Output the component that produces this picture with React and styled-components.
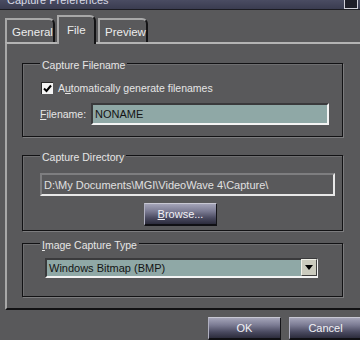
import React from "react";
import styled, { createGlobalStyle } from "styled-components";

const Global = createGlobalStyle`
  html, body { margin: 0; padding: 0; background: #5a5a5c; }
  body { font-family: "Liberation Sans", Arial, sans-serif; font-size: 11px; color: #e6e6e6; overflow: hidden; }
`;

const Window = styled.div`
  width: 360px;
  height: 340px;
  display: flex;
  flex-direction: column;
  background: #59595b;
  overflow: hidden;
`;

const TitleBar = styled.div`
  height: 9px;
  flex: none;
  display: flex;
  justify-content: space-between;
  overflow: hidden;
  background: linear-gradient(180deg, #4a4c62, #3a3c50);
  border-bottom: 1px solid #1c1c22;
`;

const Title = styled.span`
  display: block;
  margin: -6px 0 0 7px;
  font-size: 11px;
  line-height: 13px;
  color: #d8dae6;
`;

const TitleButton = styled.div`
  width: 14px;
  height: 12px;
  margin: -3px 2px 0 0;
  background: #1e1e28;
  border: 1px solid #d0d0d8;
  box-sizing: border-box;
`;

const TabRow = styled.div`
  height: 32px;
  flex: none;
  display: flex;
  align-items: flex-end;
  padding-left: 5px;
  gap: 2px;
  position: relative;
  z-index: 1;
`;

const Tab = styled.div`
  box-sizing: border-box;
  height: ${(p) => (p.$active ? "29px" : "24px")};
  width: ${(p) => p.$w}px;
  padding: ${(p) => (p.$active ? "6px 0 0 8px" : "5px 0 0 5px")};
  background: #59595b;
  border-top: 2px solid #a8a8a8;
  border-left: 2px solid #a8a8a8;
  border-right: 2px solid #141416;
  border-top-right-radius: 6px;
  margin-bottom: ${(p) => (p.$active ? "-2px" : "0")};
  font-size: 11.5px;
  color: #ececec;
  line-height: 14px;
  white-space: nowrap;
`;

const Panel = styled.div`
  box-sizing: border-box;
  height: 268px;
  margin-left: 5px;
  width: 380px;
  flex: none;
  border-top: 2px solid #b4b4b4;
  border-left: 2px solid #a8a8a8;
  border-bottom: 2px solid #111113;
  padding: 19px 0 0 15px;
  display: flex;
  flex-direction: column;
`;

const Group = styled.div`
  position: relative;
  box-sizing: border-box;
  width: 321px;
  height: ${(p) => p.$h}px;
  margin-bottom: ${(p) => p.$mb}px;
  border: 1px solid #121214;
  box-shadow: 1px 1px 0 #7c7c7e, inset 1px 1px 0 #6e6e70;
  padding: ${(p) => p.$pad};
  display: flex;
  flex-direction: column;
`;

const Legend = styled.span`
  position: absolute;
  top: -5px;
  left: 17px;
  padding: 0 2px;
  background: #59595b;
  font-size: 10.5px;
  line-height: 13px;
  color: #e6e6e6;
`;

const Row = styled.div`
  display: flex;
  align-items: center;
  gap: ${(p) => p.$gap || 0}px;
  margin-top: ${(p) => p.$mt || 0}px;
  margin-left: ${(p) => p.$ml || 0}px;
  width: ${(p) => (p.$w ? `${p.$w}px` : "auto")};
  justify-content: ${(p) => (p.$spread ? "space-between" : "flex-start")};
`;

const Check = styled.span`
  box-sizing: border-box;
  width: 12px;
  height: 12px;
  flex: none;
  background: #f4f4f4;
  border-top: 1px solid #2a2a2a;
  border-left: 1px solid #2a2a2a;
  display: flex;
  align-items: center;
  justify-content: center;
`;

const Label = styled.span`
  font-size: 10.5px;
  color: #e6e6e6;
  white-space: nowrap;
`;

const U = styled.span`
  text-decoration: underline;
`;

const TealField = styled.div`
  box-sizing: border-box;
  width: ${(p) => p.$w}px;
  height: ${(p) => p.$h}px;
  background: #8fa8a6;
  border-top: 2px solid #3a3a3c;
  border-left: 2px solid #3a3a3c;
  border-bottom: 2px solid #f4f4f4;
  border-right: 2px solid #f4f4f4;
  color: #141414;
  font-size: 11px;
  padding-left: 2px;
  display: flex;
  align-items: center;
`;

const PathField = styled.div`
  box-sizing: border-box;
  width: 295px;
  height: 23px;
  border-top: 2px solid #7e7e80;
  border-left: 2px solid #7e7e80;
  border-bottom: 2px solid #e8e8e8;
  border-right: 2px solid #e8e8e8;
  color: #e0e0e0;
  font-size: 11px;
  padding-left: 2px;
  display: flex;
  align-items: center;
  white-space: nowrap;
`;

const Button = styled.div`
  box-sizing: border-box;
  width: 73px;
  height: 23px;
  flex: none;
  background: linear-gradient(180deg, #a4a4b8 0%, #7c7c94 35%, #4a4a60 70%, #2c2c3c 100%);
  border-top: 1px solid #c8c8d4;
  border-left: 1px solid #b0b0c0;
  border-right: 1px solid #141418;
  border-bottom: 2px solid #101014;
  color: #f2f2f6;
  font-size: 11px;
  display: flex;
  align-items: center;
  justify-content: center;
`;

const Select = styled.div`
  box-sizing: border-box;
  width: 273px;
  height: 20px;
  background: #8fa8a6;
  border-top: 2px solid #3a3a3c;
  border-left: 2px solid #3a3a3c;
  border-bottom: 2px solid #f4f4f4;
  border-right: 1px solid #f4f4f4;
  display: flex;
  align-items: center;
  justify-content: space-between;
  color: #141414;
  font-size: 11px;
  padding-left: 2px;
`;

const DropButton = styled.div`
  box-sizing: border-box;
  width: 16px;
  height: 17px;
  margin-top: -1px;
  background: #cbcbbe;
  border-top: 1px solid #f0f0e8;
  border-left: 1px solid #f0f0e8;
  border-right: 1px solid #404040;
  border-bottom: 1px solid #404040;
  display: flex;
  align-items: center;
  justify-content: center;
`;

const Footer = styled.div`
  display: flex;
  gap: 8px;
  padding: 7px 0 0 208px;
`;

export default function App() {
  return (
    <>
      <Global />
      <Window>
        <TitleBar>
          <Title>Capture Preferences</Title>
          <TitleButton />
        </TitleBar>
        <TabRow>
          <Tab $w={50}>General</Tab>
          <Tab $w={39} $active>File</Tab>
          <Tab $w={50}>Preview</Tab>
        </TabRow>
        <Panel>
          <Group $h={74} $mb={18} $pad="18px 0 0 17px">
            <Legend>Capture Filename</Legend>
            <Row $gap={5} $ml={1}>
              <Check>
                <svg width="9" height="9" viewBox="0 0 9 9">
                  <path d="M1 4.5 L3.5 7 L8 1.5" stroke="#000" strokeWidth="2" fill="none" />
                </svg>
              </Check>
              <Label>
                A<U>u</U>tomatically generate filenames
              </Label>
            </Row>
            <Row $mt={9} $w={289} $spread>
              <Label>
                <U>F</U>ilename:
              </Label>
              <TealField $w={238} $h={22}>NONAME</TealField>
            </Row>
          </Group>
          <Group $h={76} $mb={12} $pad="17px 0 0 17px">
            <Legend>Capture Directory</Legend>
            <PathField>D:\My Documents\MGI\VideoWave 4\Capture\</PathField>
            <Row $mt={7} $ml={104}>
              <Button>
                <U>B</U>rowse...
              </Button>
            </Row>
          </Group>
          <Group $h={54} $mb={0} $pad="14px 0 0 22px">
            <Legend>
              <U>I</U>mage Capture Type
            </Legend>
            <Select>
              Windows Bitmap (BMP)
              <DropButton>
                <svg width="8" height="5" viewBox="0 0 8 5">
                  <path d="M0 0 H8 L4 5 Z" fill="#000" />
                </svg>
              </DropButton>
            </Select>
          </Group>
        </Panel>
        <Footer>
          <Button>OK</Button>
          <Button>Cancel</Button>
        </Footer>
      </Window>
    </>
  );
}
